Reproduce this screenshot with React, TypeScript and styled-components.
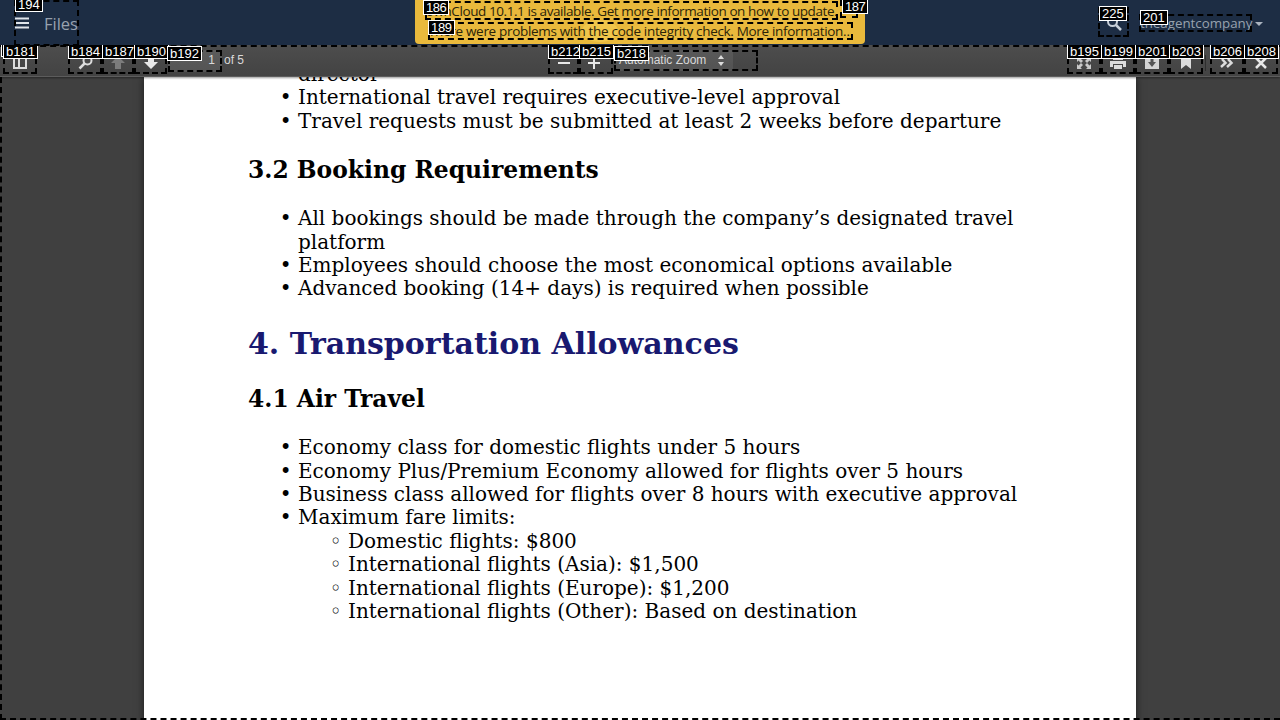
import React from 'react';
import styled, { createGlobalStyle } from 'styled-components';

const GlobalStyle = createGlobalStyle`
  html, body {
    margin: 0;
    padding: 0;
    width: 1280px;
    height: 720px;
    overflow: hidden;
    background: #404040;
  }
  * { box-sizing: border-box; }
`;

const App = () => (
  <>
    <GlobalStyle />
    <Shell>
      <Header>
        <MenuButton>
          <Tag $x={1} $y={-3}>194</Tag>
          <svg width="14" height="12" viewBox="0 0 14 12"><path d="M0 1.500h14M0 6h14M0 10.500h14" stroke="#dfe4ea" strokeWidth="2" /></svg>
          <AppName>Files</AppName>
        </MenuButton>
        <Notifications>
          <LogoGhost width="130" height="26" viewBox="0 0 130 26">
            <ellipse cx="25" cy="15" rx="18" ry="11" fill="#f6cf55" />
            <ellipse cx="85" cy="15" rx="38" ry="7" fill="#edc044" />
          </LogoGhost>
          <FirstNotice>
            <Tag $x={-2} $y={-1}>186</Tag>
            ownCloud 10.1.1 is available. Get more information on how to update.
            <CloseMark><Tag $x={2} $y={-1}>187</Tag></CloseMark>
          </FirstNotice>
          <SecondNotice>
            <Tag $y={-2}>189</Tag>
            There were problems with the code integrity check. More information…
          </SecondNotice>
        </Notifications>
        <HeaderRight>
          <SearchButton>
            <Tag $x={1} $y={-1}>225</Tag>
            <svg width="16" height="16" viewBox="0 0 16 16"><circle cx="6.500" cy="6.500" r="4.500" fill="none" stroke="#c8d0da" strokeWidth="2" /><path d="M10 10l5 5" stroke="#c8d0da" strokeWidth="2.500" /></svg>
          </SearchButton>
          <UserMenu>
            <Tag $x={1}>201</Tag>
            theagentcompany
          </UserMenu>
          <Caret />
        </HeaderRight>
      </Header>
      <Toolbar>
        <Tag $x={1} $y={-3} $under>b180</Tag>
        <ToolGroup>
          <ToolButton><Tag>b181</Tag><svg width="14" height="12" viewBox="0 0 14 12"><path d="M1 1h12v10H1zM6 1v10" fill="none" stroke="#dcdcdc" strokeWidth="2" /></svg></ToolButton>
          <ToolGap />
          <ToolButton><Tag>b184</Tag><svg width="15" height="15" viewBox="0 0 15 15"><circle cx="9.500" cy="5.500" r="4" fill="none" stroke="#dcdcdc" strokeWidth="2" /><path d="M6.500 8.500L1.500 13.500" stroke="#dcdcdc" strokeWidth="2.500" /></svg></ToolButton>
          <ToolButton $w={32}><Tag>b187</Tag><svg width="14" height="13" viewBox="0 0 14 13"><path d="M7 0L0 7h4v6h6V7h4z" fill="#7c7c7c" /></svg></ToolButton>
          <ToolButton $w={33}><Tag>b190</Tag><svg width="14" height="13" viewBox="0 0 14 13"><path d="M7 13L0 6h4V0h6v6h4z" fill="#e8e8e8" /></svg></ToolButton>
          <PageInput><Tag $x={-1}>b192</Tag>1</PageInput>
          <PageCount>of 5</PageCount>
        </ToolGroup>
        <ToolGroup>
          <ToolButton $w={31}><Tag>b212</Tag><svg width="12" height="12" viewBox="0 0 12 12"><path d="M0 6h12" stroke="#e8e8e8" strokeWidth="2" /></svg></ToolButton>
          <ZoomInButton><Tag>b215</Tag><svg width="12" height="12" viewBox="0 0 12 12"><path d="M0 6h12M6 0v12" stroke="#e8e8e8" strokeWidth="2" /></svg></ZoomInButton>
          <ZoomWrap>
            <Tag>b218</Tag>
            <ZoomSelect>
              Automatic Zoom
              <svg width="8" height="11" viewBox="0 0 8 11"><path d="M4 0l3 4H1zM4 11L1 7h6z" fill="#dcdcdc" /></svg>
            </ZoomSelect>
          </ZoomWrap>
        </ToolGroup>
        <RightTools>
          <ToolButton><Tag>b195</Tag><svg width="14" height="12" viewBox="0 0 14 12"><path d="M0 0h5L3.500 1.500 6 4 4 6 1.500 3.500 0 5zM14 0v5l-1.500-1.500L10 6 8 4l2.500-2.500L9 0zM0 12V7l1.500 1.500L4 6l2 2-2.500 2.500L5 12zM14 12H9l1.500-1.500L8 8l2-2 2.500 2.500L14 7z" fill="#c8c8c8" /></svg></ToolButton>
          <ToolButton><Tag>b199</Tag><svg width="16" height="12" viewBox="0 0 16 12"><path d="M3 0h10v3H3zM0 4h16v6h-3V7H3v3H0zM4 8h8v4H4z" fill="#dcdcdc" /></svg></ToolButton>
          <ToolButton><Tag>b201</Tag><svg width="14" height="12" viewBox="0 0 14 12"><path d="M0 0h14v12H0z" fill="#d4d4d4" /><path d="M5.500 1h3v4H11l-4 5-4-5h2.500z" fill="#555" /></svg></ToolButton>
          <ToolButton><Tag>b203</Tag><svg width="10" height="13" viewBox="0 0 10 13"><path d="M0 0h10v13L5 9l-5 4z" fill="#dcdcdc" /></svg></ToolButton>
          <Divider />
          <ToolButton><Tag>b206</Tag><svg width="14" height="10" viewBox="0 0 14 10"><path d="M2 1l3.500 4L1 9M8 1l3.500 4L7 9" fill="none" stroke="#dcdcdc" strokeWidth="2.500" /></svg></ToolButton>
          <ToolButton><Tag>b208</Tag><svg width="12" height="12" viewBox="0 0 12 12"><path d="M1 1l10 10M11 1L1 11" stroke="#e8e8e8" strokeWidth="2.500" /></svg></ToolButton>
        </RightTools>
      </Toolbar>
      <Viewer>
        <PdfPage>
          <Article>
            <BulletList>
              <WrappedLine>director</WrappedLine>
              <li>International travel requires executive-level approval</li>
              <li>Travel requests must be submitted at least 2 weeks before departure</li>
            </BulletList>
            <SubHeading>3.2 Booking Requirements</SubHeading>
            <BulletList>
              <li>All bookings should be made through the company’s designated travel platform</li>
              <li>Employees should choose the most economical options available</li>
              <li>Advanced booking (14+ days) is required when possible</li>
            </BulletList>
            <SectionHeading>4. Transportation Allowances</SectionHeading>
            <SubHeading>4.1 Air Travel</SubHeading>
            <BulletList>
              <li>Economy class for domestic flights under 5 hours</li>
              <li>Economy Plus/Premium Economy allowed for flights over 5 hours</li>
              <li>Business class allowed for flights over 8 hours with executive approval</li>
              <li>
                Maximum fare limits:
                <CircleList>
                  <li>Domestic flights: $800</li>
                  <li>International flights (Asia): $1,500</li>
                  <li>International flights (Europe): $1,200</li>
                  <li>International flights (Other): Based on destination</li>
                </CircleList>
              </li>
            </BulletList>
          </Article>
        </PdfPage>
      </Viewer>
    </Shell>
  </>
);

const Shell = styled.div`
  display: flex;
  flex-direction: column;
  width: 1280px;
  height: 720px;
  overflow: hidden;
`;

const Marked = styled.div`
  position: relative;
  outline: 2px dashed #000;
  outline-offset: -2px;
`;

const Tag = styled.span<{ $x?: number; $y?: number; $under?: boolean }>`
  position: absolute;
  left: ${props => props.$x ?? 0}px;
  top: ${props => props.$y ?? -4}px;
  z-index: ${props => (props.$under ? 4 : 5)};
  padding: 0 2px;
  height: 15px;
  font: 13px/13px 'Liberation Sans', sans-serif;
  color: #fff;
  background: #000;
  border: 1px solid #fff;
  white-space: nowrap;
`;

const Header = styled.header`
  position: relative;
  z-index: 3;
  display: flex;
  align-items: flex-start;
  justify-content: space-between;
  height: 45px;
  background: #1d2d44;
`;

const MenuButton = styled(Marked)`
  display: flex;
  align-items: center;
  gap: 15px;
  width: 65px;
  height: 46px;
  margin-left: 14px;
  padding-left: 1px;
`;

const AppName = styled.span`
  font: 400 16.500px 'Open Sans', sans-serif;
  color: #98a2af;
`;

const Notifications = styled.div`
  position: absolute;
  top: 0;
  left: 50%;
  width: 450px;
  height: 44px;
  padding-top: 1px;
  background: #e9b93c;
  border-radius: 0 0 4px 4px;
  transform: translateX(-50%);
`;

const LogoGhost = styled.svg`
  position: absolute;
  left: 160px;
  top: 16px;
  opacity: 0.6;
`;

const FirstNotice = styled(Marked)`
  width: 413px;
  height: 19px;
  margin-left: 10px;
  font: 13.500px/20px 'Open Sans', sans-serif;
  letter-spacing: -0.42px;
  color: #2b2408;
  text-align: center;
  white-space: nowrap;
`;

const SecondNotice = styled(FirstNotice)`
  width: 425px;
  height: 18px;
  margin: 2px 0 0 13px;
  letter-spacing: -0.32px;
  line-height: 19px;
`;

const CloseMark = styled(Marked)`
  position: absolute;
  left: 415px;
  top: -1px;
  width: 18px;
  height: 18px;
`;

const HeaderRight = styled.div`
  display: flex;
  align-items: flex-start;
  padding-right: 17px;
`;

const SearchButton = styled(Marked)`
  display: flex;
  align-items: center;
  justify-content: center;
  width: 31px;
  height: 30px;
  margin-top: 7px;
  padding-top: 1px;
`;

const UserMenu = styled(Marked)`
  width: 113px;
  height: 18px;
  margin: 14px 0 0 10px;
  padding-left: 1px;
  font: 13.300px/18px 'Open Sans', sans-serif;
  color: #98a2af;
  white-space: nowrap;
`;

const Caret = styled.span`
  width: 0;
  height: 0;
  margin: 22px 0 0 3px;
  border-left: 4px solid transparent;
  border-right: 4px solid transparent;
  border-top: 4px solid #aab3bf;
`;

const Toolbar = styled.div`
  position: relative;
  z-index: 2;
  display: grid;
  grid-template-columns: 545px 210px 1fr;
  height: 32px;
  padding: 3px 2px 0 3px;
  background: linear-gradient(#4d4d4d, #434343);
  border-bottom: 1px solid #5c5c5c;
  box-shadow: 0 1px 2px rgba(0, 0, 0, 0.4);

  &::before {
    content: '';
    position: absolute;
    left: 0;
    right: 0;
    top: 0;
    border-top: 2px dashed #000;
  }
`;

const ToolGroup = styled.div`
  display: flex;
  align-items: flex-start;
`;

const RightTools = styled(ToolGroup)`
  justify-content: flex-end;
`;

const ToolButton = styled(Marked)<{ $w?: number }>`
  display: flex;
  align-items: center;
  justify-content: center;
  width: ${props => props.$w ?? 34}px;
  height: 26px;
  padding-top: 3px;
`;

const ZoomInButton = styled(ToolButton)`
  padding-right: 4px;
`;

const ToolGap = styled.div`
  width: 31px;
`;

const Divider = styled.div`
  width: 1px;
  height: 16px;
  margin: 7px 4px 0 2px;
  background: #2e2e2e;
`;

const PageInput = styled(Marked)`
  width: 54px;
  height: 22px;
  margin: 2px 0 0 1px;
  padding: 3px 7px 0 0;
  font: 12px 'Liberation Sans', sans-serif;
  color: #d9d9d9;
  text-align: right;
  background: rgba(255, 255, 255, 0.09);
`;

const PageCount = styled.span`
  margin: 5px 0 0 2px;
  font: 12px 'Liberation Sans', sans-serif;
  color: #d9d9d9;
`;

const ZoomWrap = styled(Marked)`
  width: 144px;
  height: 21px;
  margin: 2px 0 0 1px;
`;

const ZoomSelect = styled.div`
  display: flex;
  align-items: center;
  justify-content: space-between;
  width: 119px;
  height: 21px;
  padding: 0 8px 1px 5px;
  font: 12px 'Liberation Sans', sans-serif;
  color: #d9d9d9;
  background: rgba(255, 255, 255, 0.08);
  border-radius: 2px;
`;

const Viewer = styled.main`
  position: relative;
  flex: 1;
  display: flex;
  justify-content: center;
  overflow: hidden;
  background: #404040;

  &::after {
    content: '';
    position: absolute;
    inset: 0;
    border-left: 2px dashed #000;
    border-bottom: 2px dashed #000;
    pointer-events: none;
  }
`;

const PdfPage = styled.div`
  width: 992px;
  height: 700px;
  background: #fff;
  box-shadow: 0 0 8px rgba(0, 0, 0, 0.6);
`;

const Article = styled.article`
  margin-top: -14px;
  padding: 0 104px;
  font: 20px/23.400px 'DejaVu Serif', serif;
  color: #000;
`;

const BulletList = styled.ul`
  margin: 0;
  padding-left: 50px;
  list-style-type: '• ';
`;

const WrappedLine = styled.li`
  list-style: none;
`;

const CircleList = styled.ul`
  margin: 0;
  padding-left: 50px;
  list-style-type: '◦ ';
`;

const SubHeading = styled.h3`
  margin: 23.400px 0;
  font-size: 23.400px;
  line-height: 27.200px;
  font-weight: 700;
`;

const SectionHeading = styled.h2`
  margin: 24.900px 0;
  font-size: 30px;
  line-height: 35px;
  font-weight: 700;
  color: #191970;
`;

export default App;
